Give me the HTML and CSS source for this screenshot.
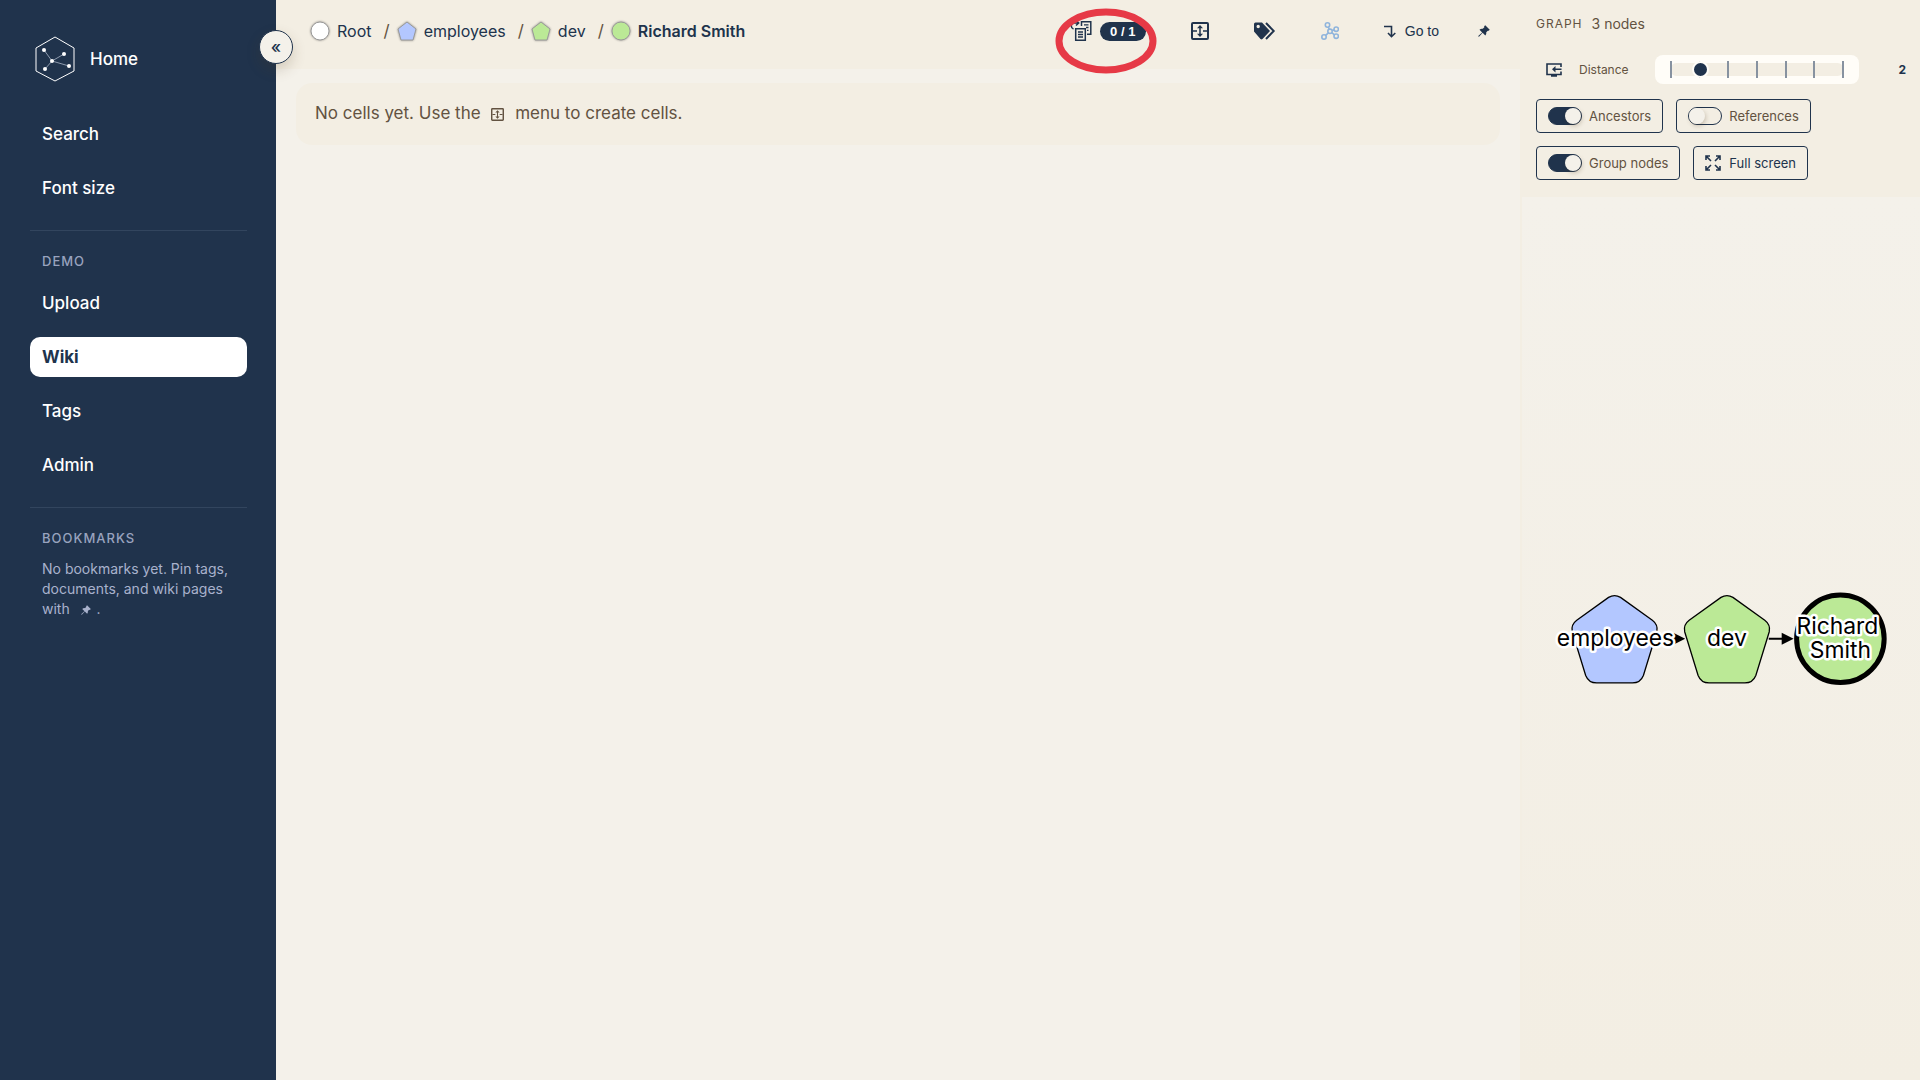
FILE: index.html
```html
<!DOCTYPE html>
<html lang="en">
<head>
<meta charset="utf-8">
<meta name="viewport" content="width=device-width, initial-scale=1">
<title>Richard Smith – Wiki</title>
<link rel="stylesheet" href="styles.css">
</head>
<body>
<svg class="sprite" aria-hidden="true">
  <symbol id="i-pin" viewBox="0 0 24 24"><path fill="currentColor" d="M14.500 0.500l9 9-2.200 2.200-1.600-.4-3.200 3.200c.4 2.600-.2 4.800-1.900 6.500l-5.400-5.400L2.500 23l-2 .5.500-2 7.400-6.700L3 9.400C4.700 7.700 6.900 7.100 9.500 7.500l3.200-3.200-.4-1.600z"/></symbol>
  <symbol id="i-cells" viewBox="0 0 18 18"><g fill="none" stroke="currentColor" stroke-width="2"><rect x="1" y="1" width="16" height="16" rx="1"/><path d="M2 9h4M12 9h4M9 5v8" stroke-width="1.500"/></g><path fill="currentColor" d="M9 3l3 3.200H6zM9 15l-3-3.200h6z"/></symbol>
</svg>
<div class="app">
  <aside class="sidebar">
    <a class="home" href="#">
      <svg class="logo" viewBox="0 0 40 46" aria-hidden="true">
        <path d="M20 1L39 12v23L20 45 1 35V12z" fill="none" stroke="#fff" stroke-width="1"/>
        <path d="M17 25L9 14M17 25l12-7M17 25l17 5M17 25l-7 8" stroke="#8d9aad" stroke-width="1"/>
        <g fill="#fff"><circle cx="17" cy="25" r="2"/><circle cx="9" cy="14" r="2"/><circle cx="29" cy="18" r="2"/><circle cx="34" cy="30" r="2"/><circle cx="10" cy="33" r="2"/></g>
      </svg>
      <span>Home</span>
    </a>
    <nav class="menu">
      <a href="#">Search</a>
      <a href="#">Font size</a>
    </nav>
    <section class="group">
      <h2>DEMO</h2>
      <nav class="menu">
        <a href="#">Upload</a>
        <a class="active" href="#" aria-current="page">Wiki</a>
        <a href="#">Tags</a>
        <a href="#">Admin</a>
      </nav>
    </section>
    <section class="group">
      <h2>BOOKMARKS</h2>
      <p>No bookmarks yet. Pin tags, documents, and wiki pages with <svg class="pin-inline" role="img" aria-label="pin"><use href="#i-pin"/></svg> .</p>
    </section>
    <button class="collapse" type="button" aria-label="Collapse sidebar">«</button>
  </aside>

  <main class="main">
    <header class="topbar">
      <nav aria-label="Breadcrumb">
        <ol class="crumbs">
          <li><svg class="shape" viewBox="0 0 20 20"><circle cx="10" cy="10" r="9" fill="#fff" stroke="#999"/></svg><a href="#">Root</a></li>
          <li><svg class="shape" viewBox="0 0 20 20"><path d="M10 1l9 7-3 11H4L1 8z" fill="#b3c7ff" stroke="#999" stroke-linejoin="round"/></svg><a href="#">employees</a></li>
          <li><svg class="shape" viewBox="0 0 20 20"><path d="M10 1l9 7-3 11H4L1 8z" fill="#bbe996" stroke="#999" stroke-linejoin="round"/></svg><a href="#">dev</a></li>
          <li><svg class="shape" viewBox="0 0 20 20"><circle cx="10" cy="10" r="9" fill="#bbe996" stroke="#999"/></svg><a class="current" href="#" aria-current="page">Richard Smith</a></li>
        </ol>
      </nav>
      <div class="tools">
        <button class="templates" type="button" aria-label="Templates">
          <svg width="22" height="22" viewBox="0 0 22 22" fill="none" stroke="currentColor" stroke-width="1.500"><path d="M11.500 6V1.700h9.300v12.600H17"/><path d="M5.700 8.700h9.600v11.600H5.700z"/><path d="M8 12h5M8 14.500h5M8 17h5M14 4.800h4.500M16 7.500h2.500M17 10.300h1.500" stroke-width="1.300"/><path d="M3.500 9C.5 8 .5 3.500 4 3h4M6 .5L8.700 3 6 5.500"/></svg>
          <span class="badge">0 / 1</span>
          <svg class="mark" viewBox="0 0 102 66" aria-hidden="true"><ellipse cx="51" cy="33" rx="47" ry="29"/></svg>
        </button>
        <button type="button" aria-label="Cells"><svg width="18" height="18"><use href="#i-cells"/></svg></button>
        <button type="button" aria-label="Tags"><svg width="22" height="18" viewBox="0 0 22 18"><path fill="currentColor" fill-rule="evenodd" d="M0 2Q0 .5 1.500.5H8L16 9 8.500 17Q7.500 17.800 6.500 17L0 9.500zM4.200 2.800a1.700 1.700 0 100 3.400 1.700 1.700 0 000-3.400z"/><path d="M12 1l7.700 8-7.700 8" fill="none" stroke="currentColor" stroke-width="2"/></svg></button>
        <button class="soft" type="button" aria-label="Graph"><svg width="18" height="18" viewBox="0 0 18 18" fill="none" stroke="currentColor" stroke-width="1.600"><circle cx="6.500" cy="3" r="2.200"/><circle cx="9" cy="9.300" r="2.200"/><circle cx="15.200" cy="7.200" r="2.200"/><circle cx="3" cy="15" r="2.200"/><circle cx="15.200" cy="14.200" r="2.200"/><path d="M7.300 5l.9 2.200M11.100 8.600l2-.7M7.400 10.800l-2.800 2.600M10.800 10.600l2.600 2.200"/></svg></button>
        <button class="goto" type="button"><svg width="12" height="13" viewBox="0 0 12 13" fill="none" stroke="currentColor" stroke-width="1.600"><path d="M0 1.500h7.500v10M4 8l3.500 3.700L11.300 8"/></svg>Go to</button>
        <button type="button" aria-label="Pin page"><svg width="12" height="12"><use href="#i-pin"/></svg></button>
      </div>
    </header>
    <p class="empty">No cells yet. Use the <svg class="cells-inline" role="img" aria-label="cells"><use href="#i-cells"/></svg> menu to create cells.</p>
  </main>

  <aside class="graph">
    <div class="controls">
      <div class="title"><h2>GRAPH</h2><span>3 nodes</span></div>
      <div class="distance">
        <button type="button" aria-label="Dock graph"><svg width="16" height="14" viewBox="0 0 16 14" fill="none" stroke="currentColor" stroke-width="1.600"><path d="M15 4V1H1v10.500h14V8.500M5 13h6M15.500 6.300H7"/><path d="M9.500 3L6 6.300l3.500 3.300z" fill="currentColor" stroke="none"/></svg></button>
        <label for="distance">Distance</label>
        <div class="slider">
          <div class="ticks" aria-hidden="true"><i></i><i></i><i></i><i></i><i></i><i></i><i></i></div>
          <input id="distance" type="range" min="1" max="7" value="2">
        </div>
        <output for="distance">2</output>
      </div>
      <div class="row">
        <label class="box"><input type="checkbox" role="switch" checked>Ancestors</label>
        <label class="box"><input type="checkbox" role="switch">References</label>
      </div>
      <div class="row">
        <label class="box"><input type="checkbox" role="switch" checked>Group nodes</label>
        <button class="box full" type="button"><svg width="16" height="16" viewBox="0 0 16 16" fill="none" stroke="currentColor" stroke-width="1.600"><path d="M1 5V1h4M1 1l5 5M11 1h4v4M15 1l-5 5M1 11v4h4M1 15l5-5M11 15h4v-4M15 15l-5-5"/></svg>Full screen</button>
      </div>
    </div>
    <div class="canvas">
      <svg viewBox="0 0 400 120" role="img" aria-label="employees, dev, Richard Smith">
        <defs><path id="pent" d="M-6 -42.500Q0 -46 6 -42.500L38 -19.500Q44 -15 42.500 -8L29 36Q26 43.500 18 43.500H-18Q-26 43.500 -29 36L-42.500 -8Q-44 -15 -38 -19.500z" stroke="#000" stroke-width="1.300"/></defs>
        <use href="#pent" x="93" y="61" fill="#b3c7ff"/>
        <use href="#pent" x="206" y="61" fill="#bbe996"/>
        <path d="M139 60h16M248 60h16" stroke="#000" stroke-width="2"/>
        <path d="M152 54l12 6-12 6zM261 54l12 6-12 6z"/>
        <circle cx="320" cy="60" r="44" fill="#bbe996" stroke="#000" stroke-width="5"/>
        <g class="labels"><text x="94" y="67">employees</text><text x="206" y="67">dev</text><text x="317" y="55">Richard</text><text x="320" y="79">Smith</text></g>
      </svg>
    </div>
  </aside>
</div>
</body>
</html>
```

FILE: styles.css
```css
* { box-sizing: border-box; }
:root {
  --navy: #20334c;
  --paper: #f4f1ea;
  --sand: #f3eee3;
  --brown: #625241;
}
body {
  margin: 0;
  background: var(--paper);
  color: var(--navy);
  font: 400 17px/24px Inter, "Noto Sans", sans-serif;
}
h2, p, ol { margin: 0; padding: 0; }
a { color: inherit; text-decoration: none; }
button {
  margin: 0;
  padding: 0;
  border: 0;
  background: none;
  color: inherit;
  font: inherit;
  cursor: pointer;
}
svg { display: block; flex: none; }
.sprite { display: none; }

.app {
  display: grid;
  grid-template-columns: 276px minmax(0, 1fr) 400px;
  min-height: 100vh;
}

/* Sidebar */
.sidebar {
  position: relative;
  padding: 36px 29px 0 30px;
  background: var(--navy);
  color: #fff;
  font-weight: 500;
}
.home {
  display: flex;
  align-items: center;
  gap: 15px;
  padding-left: 5px;
}
.logo { width: 40px; height: 46px; }
.home + .menu { margin-top: 32px; }
.menu {
  display: flex;
  flex-direction: column;
  gap: 14px;
}
.menu a {
  padding: 8px 12px;
  border-radius: 10px;
}
.menu .active {
  background: #fff;
  color: var(--navy);
  font-weight: 700;
}
.group {
  margin-top: 22px;
  padding-top: 20px;
  border-top: 1px solid #32455e;
}
.group h2 {
  padding: 0 12px;
  color: #99a3bf;
  font-size: 13px;
  font-weight: 500;
  line-height: 20px;
  letter-spacing: 1px;
}
.group .menu { margin-top: 12px; }
.group p {
  padding: 11px 10px 0 12px;
  color: #a9b2cc;
  font-size: 14px;
  font-weight: 400;
  line-height: 20px;
}
.pin-inline {
  display: inline-block;
  width: 10px;
  height: 10px;
  margin: 0 2px 0 7px;
  vertical-align: -1px;
}
.collapse {
  position: absolute;
  z-index: 2;
  top: 30px;
  right: -17px;
  width: 34px;
  height: 34px;
  border: 1px solid var(--navy);
  border-radius: 50%;
  background: var(--paper);
  color: var(--navy);
  font-size: 17px;
  font-weight: 500;
  line-height: 30px;
  box-shadow: 0 6px 14px rgb(80 60 30 / 20%);
}

/* Page */
.topbar {
  display: flex;
  justify-content: space-between;
  align-items: flex-start;
  height: 69px;
  padding: 19px 30px 0 34px;
  background: var(--sand);
}
.crumbs {
  display: flex;
  list-style: none;
  font-size: 16px;
}
.crumbs li {
  display: flex;
  align-items: center;
  gap: 7px;
}
.crumbs li + li::before {
  content: "/";
  margin-left: 12px;
  color: var(--brown);
  font-size: 17px;
}
.crumbs .current { font-weight: 600; }
.shape {
  width: 20px;
  height: 20px;
  filter: drop-shadow(0 0 1px rgb(0 0 0 / 40%));
}
.tools {
  display: flex;
  align-items: center;
  gap: 45px;
}
.tools button {
  display: flex;
  align-items: center;
  height: 24px;
}
.tools .templates {
  position: relative;
  gap: 8px;
}
.badge {
  width: 46px;
  border-radius: 10px;
  background: var(--navy);
  color: #fff;
  font: 600 13px/19px "Liberation Sans", Arial, sans-serif;
  text-align: center;
}
.mark {
  position: absolute;
  top: -11px;
  left: -15px;
  width: 102px;
  height: 66px;
  fill: none;
  stroke: #e63946;
  stroke-width: 7px;
}
.soft { color: #8fb4dc; }
.tools .goto {
  gap: 9px;
  margin-right: -6px;
  font: 14px/24px "Liberation Sans", Arial, sans-serif;
}
.empty {
  margin: 14px 20px;
  padding: 18px 19px 20px;
  border-radius: 16px;
  background: var(--sand);
  color: var(--brown);
}
.cells-inline {
  display: inline-block;
  width: 13px;
  height: 13px;
  margin: 0 6px;
  vertical-align: -2px;
}

/* Graph panel */
.graph {
  display: flex;
  flex-direction: column;
}
.controls {
  padding: 14px 14px 17px 16px;
  background: var(--sand);
  color: var(--brown);
  font-size: 12px;
}
.title {
  display: flex;
  gap: 9px;
  font-size: 14px;
  line-height: 20px;
}
.title h2 {
  font-size: 12px;
  font-weight: 400;
  line-height: 20px;
  letter-spacing: 1px;
}
.distance {
  display: flex;
  align-items: center;
  height: 29px;
  margin: 21px 0 15px;
}
.distance button {
  padding: 0 17px 0 10px;
  color: var(--navy);
}
.distance label { width: 76px; }
.slider {
  position: relative;
  width: 204px;
  height: 29px;
  padding: 0 15px;
  border-radius: 8px;
  background: #fffdf8;
}
.ticks {
  display: flex;
  justify-content: space-between;
  align-items: center;
  height: 13px;
  margin-top: 8px;
  border-radius: 7px;
  background: var(--sand);
}
.ticks i {
  width: 2px;
  height: 17px;
  background: #8792a0;
}
.slider input {
  position: absolute;
  inset: 0 8px;
  width: 188px;
  height: 29px;
  margin: 0;
  background: none;
  appearance: none;
}
.slider input::-webkit-slider-thumb {
  width: 17px;
  height: 17px;
  border: 2px solid #fffdf8;
  border-radius: 50%;
  background: var(--navy);
  appearance: none;
}
.distance output {
  margin-left: auto;
  color: var(--navy);
  font-weight: 700;
}
.row {
  display: flex;
  gap: 13px;
}
.row + .row { margin-top: 13px; }
.box {
  display: flex;
  align-items: center;
  gap: 7px;
  height: 34px;
  padding: 0 11px;
  border: 1px solid var(--navy);
  border-radius: 4px;
  font-size: 13px;
}
.full {
  gap: 8px;
  color: var(--navy);
}
.box input {
  display: flex;
  width: 34px;
  height: 18px;
  margin: 0;
  border: 1px solid var(--navy);
  border-radius: 9px;
  appearance: none;
}
.box input::before {
  content: "";
  width: 16px;
  height: 16px;
  border-radius: 50%;
  background: var(--paper);
  box-shadow: 1px 2px 4px rgb(80 60 30 / 25%);
}
.box input:checked {
  justify-content: flex-end;
  background: var(--navy);
}
.canvas {
  display: flex;
  flex: 1;
  align-items: center;
  border-left: 2px solid var(--sand);
  background: linear-gradient(var(--paper), var(--sand));
}
.canvas svg { width: 100%; }
.labels {
  fill: #000;
  stroke: #fff;
  stroke-width: 5px;
  stroke-linejoin: round;
  paint-order: stroke;
  font-size: 23px;
  font-weight: 400;
  text-anchor: middle;
}
```
